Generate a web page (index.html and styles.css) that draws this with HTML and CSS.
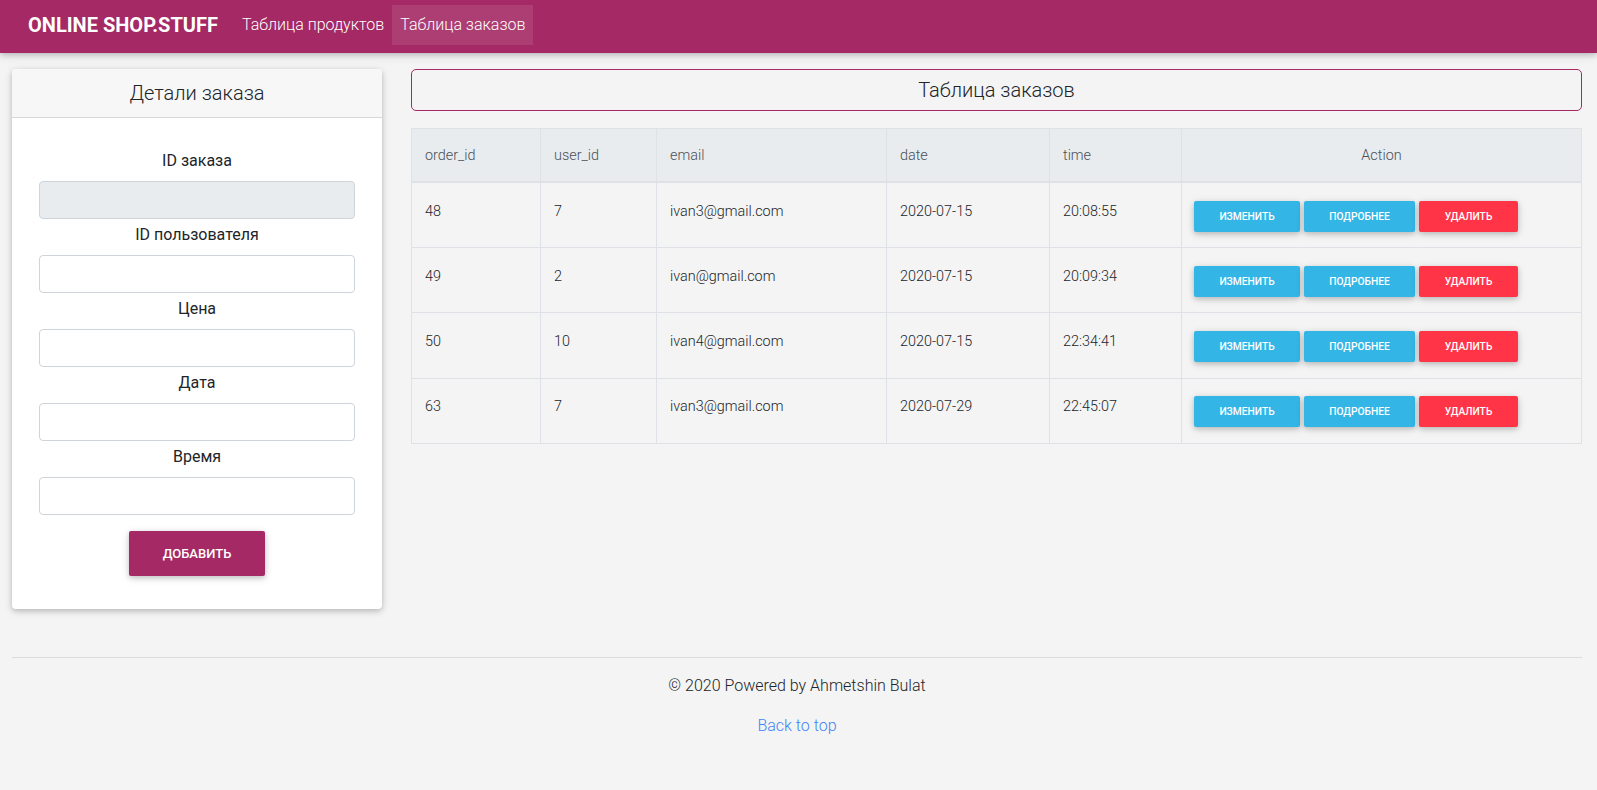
FILE: index.html
```html
<!DOCTYPE html>
<html lang="ru">
<head>
<meta charset="utf-8">
<title>Online Shop.Stuff</title>
<link rel="stylesheet" href="styles.css">
</head>
<body>
<nav class="navbar">
  <a class="brand" href="#">ONLINE SHOP.STUFF</a>
  <a class="nav-link" href="#">Таблица продуктов</a>
  <a class="nav-link active" href="#">Таблица заказов</a>
</nav>

<div class="page">
  <main class="layout">
    <section class="card">
      <div class="card-header">Детали заказа</div>
      <form class="card-body">
        <label class="label">ID заказа</label>
        <input class="input" type="text" disabled>
        <label class="label">ID пользователя</label>
        <input class="input" type="text">
        <label class="label">Цена</label>
        <input class="input" type="text">
        <label class="label">Дата</label>
        <input class="input" type="text">
        <label class="label">Время</label>
        <input class="input" type="text">
        <button class="btn-add" type="button">ДОБАВИТЬ</button>
      </form>
    </section>

    <section class="orders">
      <div class="title-box">Таблица заказов</div>
      <table class="table">
        <colgroup>
          <col class="c-order"><col class="c-user"><col class="c-email"><col class="c-date"><col class="c-time"><col class="c-action">
        </colgroup>
        <thead>
          <tr><th>order_id</th><th>user_id</th><th>email</th><th>date</th><th>time</th><th class="center">Action</th></tr>
        </thead>
        <tbody>
          <tr><td>48</td><td>7</td><td>ivan3@gmail.com</td><td>2020-07-15</td><td>20:08:55</td>
            <td class="actions"><div class="btns"><button class="btn info b-edit">ИЗМЕНИТЬ</button><button class="btn info b-more">ПОДРОБНЕЕ</button><button class="btn danger b-del">УДАЛИТЬ</button></div></td></tr>
          <tr><td>49</td><td>2</td><td>ivan@gmail.com</td><td>2020-07-15</td><td>20:09:34</td>
            <td class="actions"><div class="btns"><button class="btn info b-edit">ИЗМЕНИТЬ</button><button class="btn info b-more">ПОДРОБНЕЕ</button><button class="btn danger b-del">УДАЛИТЬ</button></div></td></tr>
          <tr><td>50</td><td>10</td><td>ivan4@gmail.com</td><td>2020-07-15</td><td>22:34:41</td>
            <td class="actions"><div class="btns"><button class="btn info b-edit">ИЗМЕНИТЬ</button><button class="btn info b-more">ПОДРОБНЕЕ</button><button class="btn danger b-del">УДАЛИТЬ</button></div></td></tr>
          <tr><td>63</td><td>7</td><td>ivan3@gmail.com</td><td>2020-07-29</td><td>22:45:07</td>
            <td class="actions"><div class="btns"><button class="btn info b-edit">ИЗМЕНИТЬ</button><button class="btn info b-more">ПОДРОБНЕЕ</button><button class="btn danger b-del">УДАЛИТЬ</button></div></td></tr>
        </tbody>
      </table>
    </section>
  </main>

  <footer class="footer">
    <hr class="rule">
    <p class="copy">© 2020 Powered by Ahmetshin Bulat</p>
    <p class="back"><a href="#">Back to top</a></p>
  </footer>
</div>
</body>
</html>
```

FILE: styles.css
```css
* { box-sizing: border-box; }

html, body {
  margin: 0;
  padding: 0;
}

body {
  background: #f4f4f4;
  font-family: Roboto, "Noto Sans", sans-serif;
  font-size: 16px;
  line-height: 1.5;
  color: #212529;
}

.navbar {
  display: flex;
  align-items: flex-start;
  height: 53px;
  padding: 5px 28px 0 28px;
  background: #a42964;
  box-shadow: 0 2px 5px 0 rgba(0,0,0,.16), 0 2px 10px 0 rgba(0,0,0,.12);
  position: relative;
  z-index: 2;
}

.brand {
  color: #fff;
  text-decoration: none;
  font-size: 20px;
  font-weight: 700;
  line-height: 30px;
  padding: 5px 0;
  margin-right: 16px;
}

.nav-link {
  color: #fff;
  text-decoration: none;
  font-size: 16px;
  font-weight: 300;
  line-height: 24px;
  padding: 8px 8px;
}

.nav-link.active {
  background: rgba(255,255,255,.1);
}

.page {
  padding: 16px 15px 0 12px;
}

.layout {
  display: grid;
  grid-template-columns: 370px 1fr;
  column-gap: 29px;
  align-items: start;
}

.card {
  background: #fff;
  border-radius: 4px;
  box-shadow: 0 2px 5px 0 rgba(0,0,0,.16), 0 2px 10px 0 rgba(0,0,0,.12);
  overflow: hidden;
}

.card-header {
  background: #f7f7f7;
  border-bottom: 1px solid rgba(0,0,0,.125);
  padding: 12px 20px;
  font-size: 20px;
  font-weight: 300;
  line-height: 24px;
  text-align: center;
  color: #212529;
}

.card-body {
  display: flex;
  flex-direction: column;
  align-items: stretch;
  padding: 31px 27px 33px;
  text-align: center;
}

.label {
  display: block;
  font-size: 16px;
  line-height: 24px;
  margin-bottom: 8px;
}

.input {
  display: block;
  width: 100%;
  height: 38px;
  margin: 0 0 4px;
  padding: 6px 12px;
  border: 1px solid #ced4da;
  border-radius: 4px;
  background: #fff;
  font-family: inherit;
  font-size: 16px;
}

.input:disabled {
  background: #e9ecef;
}

.btn-add {
  align-self: center;
  margin-top: 12px;
  width: 136px;
  height: 45px;
  padding: 0;
  border: 0;
  border-radius: 2px;
  background: #a42964;
  color: #fff;
  font-family: inherit;
  font-size: 13px;
  font-weight: 500;
  line-height: 19px;
  box-shadow: 0 2px 5px 0 rgba(0,0,0,.16), 0 2px 10px 0 rgba(0,0,0,.12);
}

.title-box {
  border: 1px solid #a42964;
  border-radius: 5px;
  padding: 8px 16px;
  font-size: 20px;
  font-weight: 300;
  line-height: 24px;
  text-align: center;
  color: #212529;
  margin-bottom: 17px;
}

.table {
  width: 100%;
  border-collapse: collapse;
  table-layout: fixed;
  border: 1px solid #dee2e6;
}

.c-order { width: 129px; }
.c-user { width: 116px; }
.c-email { width: 230px; }
.c-date { width: 163px; }
.c-time { width: 132px; }
.c-action { width: auto; }

.table th,
.table td {
  border: 1px solid #dee2e6;
  font-size: 14.4px;
  font-weight: 300;
  line-height: 21.6px;
  text-align: left;
  vertical-align: top;
  padding: 17.6px 12px 15.2px 13px;
}

.table thead th {
  background: #e9ecef;
  color: #495057;
  padding: 16px 12px 14.4px 13px;
  border-bottom: 2px solid #dee2e6;
}

.table th.center {
  text-align: center;
  padding-left: 12px;
}

.table td.actions {
  padding-left: 12px;
}

.btns {
  display: flex;
  gap: 4px;
}

.btn {
  height: 31.4px;
  padding: 0;
  border: 0;
  border-radius: 2px;
  color: #fff;
  font-family: inherit;
  font-size: 10.24px;
  font-weight: 500;
  line-height: 15.36px;
  box-shadow: 0 2px 5px 0 rgba(0,0,0,.16), 0 2px 10px 0 rgba(0,0,0,.12);
}

.info { background: #33b5e5; }
.danger { background: #ff3547; }

.b-edit { width: 106px; }
.b-more { width: 111px; }
.b-del { width: 99px; }

.footer {
  margin-top: 48px;
  text-align: center;
}

.rule {
  margin: 0 0 16px;
  border: 0;
  border-top: 1px solid rgba(0,0,0,.1);
}

.copy {
  margin: 0 0 16px;
  font-weight: 300;
  font-size: 16px;
  line-height: 24px;
}

.back {
  margin: 0;
  font-weight: 300;
  font-size: 16px;
  line-height: 24px;
}

.back a {
  color: #4285f4;
  text-decoration: none;
}
```
